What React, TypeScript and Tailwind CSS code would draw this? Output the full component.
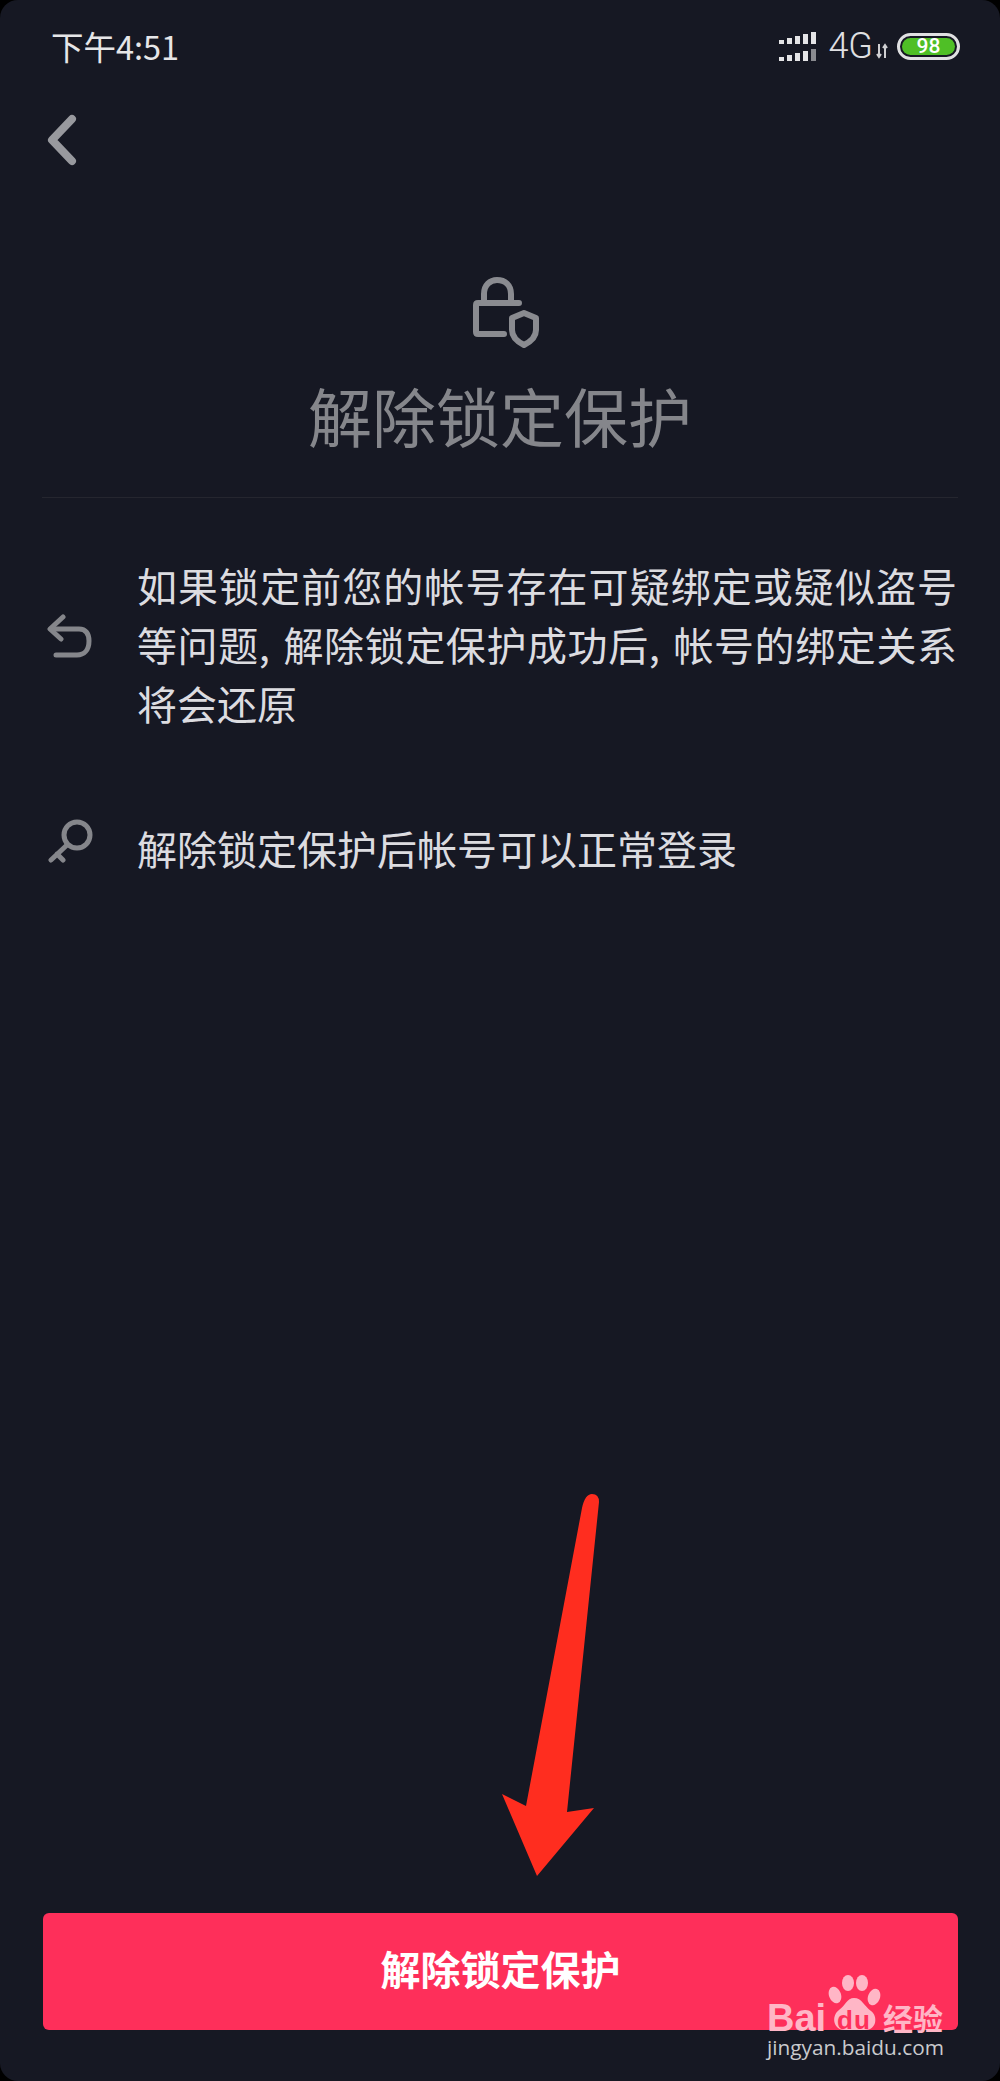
import React from "react";

const cjk = "font-['Noto_Sans_CJK_SC','Noto_Sans',sans-serif]";

function Signal() {
  const hs = [4, 6, 8, 10, 12];
  const row = (dim: boolean) => (
    <div className="flex items-end gap-[3px]">
      {hs.map((h, i) => (
        <div
          key={i}
          className={i === 4 && dim ? "w-[5px] bg-[#8a8b90]" : "w-[5px] bg-[#e4e4e6]"}
          style={{ height: h }}
        />
      ))}
    </div>
  );
  return (
    <div className="flex flex-col gap-[5px]">
      {row(false)}
      {row(true)}
    </div>
  );
}

function Arrow() {
  return (
    <svg className="absolute left-[480px] top-[1480px]" width="160" height="420" viewBox="0 0 160 420">
      <path
        d="M22 314 L46 326 L102 28 Q105 14 112 14 Q119 14 119 22 L87 332 L114 328 L57 396 Z"
        fill="#ff2d1f"
      />
    </svg>
  );
}

function Watermark() {
  return (
    <div className="absolute left-[765px] top-[1975px] h-[106px] w-[200px]">
      <svg className="absolute left-[63px] top-0" width="53" height="56" viewBox="0 0 53 56">
        <g fill="#ffb6c6">
          <ellipse cx="7" cy="20" rx="6" ry="8.5" transform="rotate(-20 7 20)" />
          <ellipse cx="20" cy="8" rx="6" ry="8" />
          <ellipse cx="34" cy="8" rx="6" ry="8" />
          <ellipse cx="46" cy="22" rx="6" ry="8.5" transform="rotate(20 46 22)" />
          <path d="M26 23 C19 23 17 31 11 35 C3 41 5 55 17 55 L37 55 C49 55 50 41 43 36 C36 31 34 23 26 23 Z" />
        </g>
      </svg>
      <span className="absolute left-[2px] top-[26px] font-['Liberation_Sans',sans-serif] text-[38px] leading-[34px] font-bold text-[#ffb6c6]">
        Bai
      </span>
      <span className="absolute left-[72px] top-[32px] font-['Liberation_Sans',sans-serif] text-[26px] leading-[26px] font-bold tracking-[1px] text-[#ff3059]">
        du
      </span>
      <span className={`absolute left-[118px] top-[25px] ${cjk} text-[30px] leading-[34px] font-bold whitespace-nowrap text-[#ffb6c6]`}>
        经验
      </span>
      <span className="absolute left-[2px] top-[60px] font-['Open_Sans',sans-serif] text-[20.8px] leading-[24px] whitespace-nowrap text-[#c9cacd]">
        jingyan.baidu.com
      </span>
    </div>
  );
}

export default function App() {
  return (
    <div className={`relative h-[2081px] w-[1000px] overflow-hidden bg-black ${cjk}`}>
      <div className="flex h-full flex-col rounded-[18px] bg-[#161823]">
        <div className="flex h-[92px] items-center justify-between pr-[40px] pl-[51px]">
          <span className="text-[32.5px] leading-none text-[#e6e6e8]">下午4:51</span>
          <div className="flex items-center">
            <Signal />
            <span className="ml-[12px] font-['Roboto',sans-serif] text-[36px] leading-none font-light text-[#e0e0e3]">4G</span>
            <svg className="mt-[10px] ml-[3px]" width="12" height="16" viewBox="0 0 12 16" fill="none" stroke="#cfcfd2" strokeWidth="2">
              <path d="M3 1V14M1 11l2 3 2-3M9 15V2M7 5l2-3 2 3" />
            </svg>
            <div className="ml-[9px] flex h-[27px] w-[63px] items-center rounded-full border-[3px] border-[#e0e0e2] p-[2px]">
              <div className="flex h-full w-full items-center justify-center rounded-full bg-[#4fbf26] font-['Roboto',sans-serif] text-[21px] leading-none font-medium text-white">
                98
              </div>
            </div>
          </div>
        </div>

        <div className="mt-[21px] pl-[46px]">
          <svg className="block" width="34" height="54" viewBox="0 0 34 54" fill="none" stroke="#98999e" strokeWidth="8" strokeLinecap="round" strokeLinejoin="round">
            <path d="M26 6 L6 27 L26 48" />
          </svg>
        </div>

        <div className="mt-[110px] flex flex-col items-center">
          <svg className="ml-[11px] block" width="66" height="72" viewBox="0 0 66 72" fill="none" stroke="#8a8b90" strokeWidth="6" strokeLinecap="round" strokeLinejoin="round">
            <path d="M11 26 V17 C11 8 17 3 24 3 C32 3 38 8 38 17 V26" />
            <path d="M46 26 H5 Q3 26 3 28 V55 Q3 57 5 57 H31" />
            <path d="M51 36 L63 41 V53 C63 60 57 65 51 68 C45 65 39 60 39 53 V41 Z" />
          </svg>
          <h1 className="mt-[19px] text-[64px] leading-[92px] font-normal text-[#85868b]">解除锁定保护</h1>
        </div>

        <div className="mx-[42px] mt-[37px] h-[1px] bg-[#25262f]" />

        <div className="mt-[58px] flex items-center pr-[40px] pl-[46px]">
          <svg className="mt-[-16px] mr-[45px] shrink-0" width="46" height="46" viewBox="0 0 46 46" fill="none" stroke="#85868b" strokeWidth="5" strokeLinecap="round" strokeLinejoin="round">
            <path d="M17 3 L4 15 L15 25" />
            <path d="M5 15 H33 C40 15 43 20 43 27 C43 36 38 41 31 41 H10" />
          </svg>
          <p className="w-[820px] text-justify text-[40px] leading-[59px] text-[#dcdce0] [word-spacing:4px]">
            如果锁定前您的帐号存在可疑绑定或疑似盗号等问题, 解除锁定保护成功后, 帐号的绑定关系将会还原
          </p>
        </div>

        <div className="mt-[86px] flex items-center pl-[48px]">
          <svg className="mt-[-16px] mr-[44px] shrink-0" width="45" height="46" viewBox="0 0 45 46" fill="none" stroke="#85868b" strokeWidth="5" strokeLinecap="round" strokeLinejoin="round">
            <circle cx="29" cy="17" r="13" />
            <path d="M19 27 L3 42 M9 36 L15 42" />
          </svg>
          <p className="text-[40px] leading-[59px] text-[#dcdce0]">解除锁定保护后帐号可以正常登录</p>
        </div>

        <div className="mt-auto pr-[42px] pb-[51px] pl-[43px]">
          <button className="flex h-[117px] w-[915px] items-center justify-center rounded-[6px] bg-[#fe2f5a] pb-[8px] text-[40px] font-bold text-white">
            解除锁定保护
          </button>
        </div>
      </div>
      <Arrow />
      <Watermark />
    </div>
  );
}
